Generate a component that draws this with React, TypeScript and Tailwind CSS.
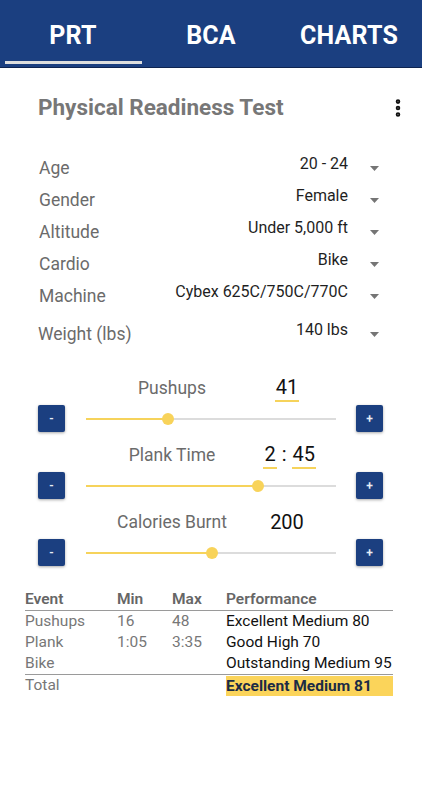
import { EllipsisVertical } from 'lucide-react'

const fields = [
  { label: 'Age', value: '20 - 24' },
  { label: 'Gender', value: 'Female' },
  { label: 'Altitude', value: 'Under 5,000 ft' },
  { label: 'Cardio', value: 'Bike' },
  { label: 'Machine', value: 'Cybex 625C/750C/770C' },
]

const rows = [
  { event: 'Pushups', min: '16', max: '48', perf: 'Excellent Medium 80' },
  { event: 'Plank', min: '1:05', max: '3:35', perf: 'Good High 70' },
  { event: 'Bike', min: '', max: '', perf: 'Outstanding Medium 95' },
]

function Caret() {
  return (
    <svg width="9" height="5" viewBox="0 0 9 5" className="ml-[22px] shrink-0">
      <path d="M0 0h9L4.5 5z" fill="#757575" />
    </svg>
  )
}

function FieldRow({ label, value, extra }: { label: string; value: string; extra?: string }) {
  return (
    <div className={`flex h-[32px] items-center pr-[43px] ${extra ?? 'pl-[39px]'}`}>
      <span className="text-[17.5px] text-[#6b6b6b]">{label}</span>
      <span className="mb-[9px] flex-1 text-right text-[16px] text-[#1f1f1f]">{value}</span>
      <Caret />
    </div>
  )
}

function StepButton({ children }: { children: string }) {
  return (
    <button className="flex h-[27px] w-[27px] shrink-0 items-center justify-center rounded-[2px] bg-[#1b3f80] text-[12px] font-semibold text-[#e8ecf5] shadow-[0_1px_3px_rgba(0,0,0,0.35)]">
      {children}
    </button>
  )
}

function Slider({ pct }: { pct: number }) {
  return (
    <div className="relative ml-[21px] mr-[20px] h-[2px] w-[250px] bg-[#dcdcdc]">
      <div className="absolute left-0 top-0 h-[2px] bg-[#f6d35b]" style={{ width: `${pct}%` }} />
      <div
        className="absolute top-[-5px] h-[12px] w-[12px] -translate-x-1/2 rounded-full bg-[#f8d35a]"
        style={{ left: `${pct}%` }}
      />
    </div>
  )
}

function Underlined({ children }: { children: string }) {
  return <span className="inline-block border-b-2 border-[#f6d35b] px-[1px] leading-[25px]">{children}</span>
}

function SliderBlock({ label, value, pct }: { label: string; value: React.ReactNode; pct: number }) {
  return (
    <div className="mb-[6px]">
      <div className="flex h-[34px] items-center pl-[86px]">
        <span className="w-[172px] text-center text-[17.5px] text-[#6b6b6b]">{label}</span>
        <div className="flex w-[58px] justify-center text-[20px] text-[#111]">{value}</div>
      </div>
      <div className="flex h-[27px] items-center pl-[38px]">
        <StepButton>-</StepButton>
        <Slider pct={pct} />
        <StepButton>+</StepButton>
      </div>
    </div>
  )
}

export default function App() {
  return (
    <div className="min-h-[800px] w-[422px] bg-white font-['Roboto',sans-serif]">
      <div className="relative flex h-[68px] border-b border-[#0e2450] bg-[#1b3f80] px-[4px]">
        {['PRT', 'BCA', 'CHARTS'].map((t, i) => (
          <div key={t} className="relative flex flex-1 items-center justify-center pt-[4px]">
            <span className="text-[25px] font-bold tracking-[0.2px] text-white">{t}</span>
            {i === 0 && <div className="absolute bottom-[3px] left-[1px] right-0 h-[3px] bg-[#dedede]" />}
          </div>
        ))}
      </div>

      <div className="mt-[24px] flex h-[32px] items-center justify-between pl-[38px] pr-[13px]">
        <h1 className="text-[22.5px] font-bold text-[#777]">Physical Readiness Test</h1>
        <EllipsisVertical size={22} strokeWidth={3} color="#111" />
      </div>

      <div className="mt-[28px]">
        {fields.map((f) => (
          <FieldRow key={f.label} label={f.label} value={f.value} />
        ))}
        <div className="mt-[6px]">
          <FieldRow label="Weight (lbs)" value="140 lbs" extra="pl-[38px]" />
        </div>
      </div>

      <div className="mt-[21px]">
        <SliderBlock label="Pushups" value={<Underlined>41</Underlined>} pct={32.8} />
        <SliderBlock
          label="Plank Time"
          pct={68.8}
          value={
            <div className="flex w-full items-baseline justify-end gap-[5px]">
              <Underlined>2</Underlined>
              <span className="mb-[3px]">:</span>
              <Underlined>45</Underlined>
            </div>
          }
        />
        <SliderBlock label="Calories Burnt" value={<span className="leading-[25px]">200</span>} pct={50.4} />
      </div>

      <table className="ml-[25px] mt-[23px] w-[368px] border-collapse text-[15.5px]">
        <colgroup>
          <col className="w-[92px]" />
          <col className="w-[55px]" />
          <col className="w-[54px]" />
          <col />
        </colgroup>
        <thead>
          <tr className="h-[21px] border-b border-[#9a9a9a] text-left leading-[20px] text-[#666]">
            <th className="p-0 font-semibold">Event</th>
            <th className="p-0 font-semibold">Min</th>
            <th className="p-0 font-semibold">Max</th>
            <th className="p-0 font-semibold">Performance</th>
          </tr>
        </thead>
        <tbody>
          {rows.map((r, i) => (
            <tr key={r.event} className={`h-[21px] leading-[21px] ${i === rows.length - 1 ? 'border-b border-[#9a9a9a]' : ''}`}>
              <td className="p-0 text-[#777]">{r.event}</td>
              <td className="p-0 text-[#777]">{r.min}</td>
              <td className="p-0 text-[#777]">{r.max}</td>
              <td className="p-0 text-[#111]">{r.perf}</td>
            </tr>
          ))}
          <tr className="h-[22px] leading-[20px]">
            <td className="p-0 text-[#777]">Total</td>
            <td className="p-0" />
            <td className="p-0" />
            <td className="p-0">
              <div className="mt-[1px] bg-[#fbd45a] font-bold text-[#1c2b45]">Excellent Medium 81</div>
            </td>
          </tr>
        </tbody>
      </table>
    </div>
  )
}
